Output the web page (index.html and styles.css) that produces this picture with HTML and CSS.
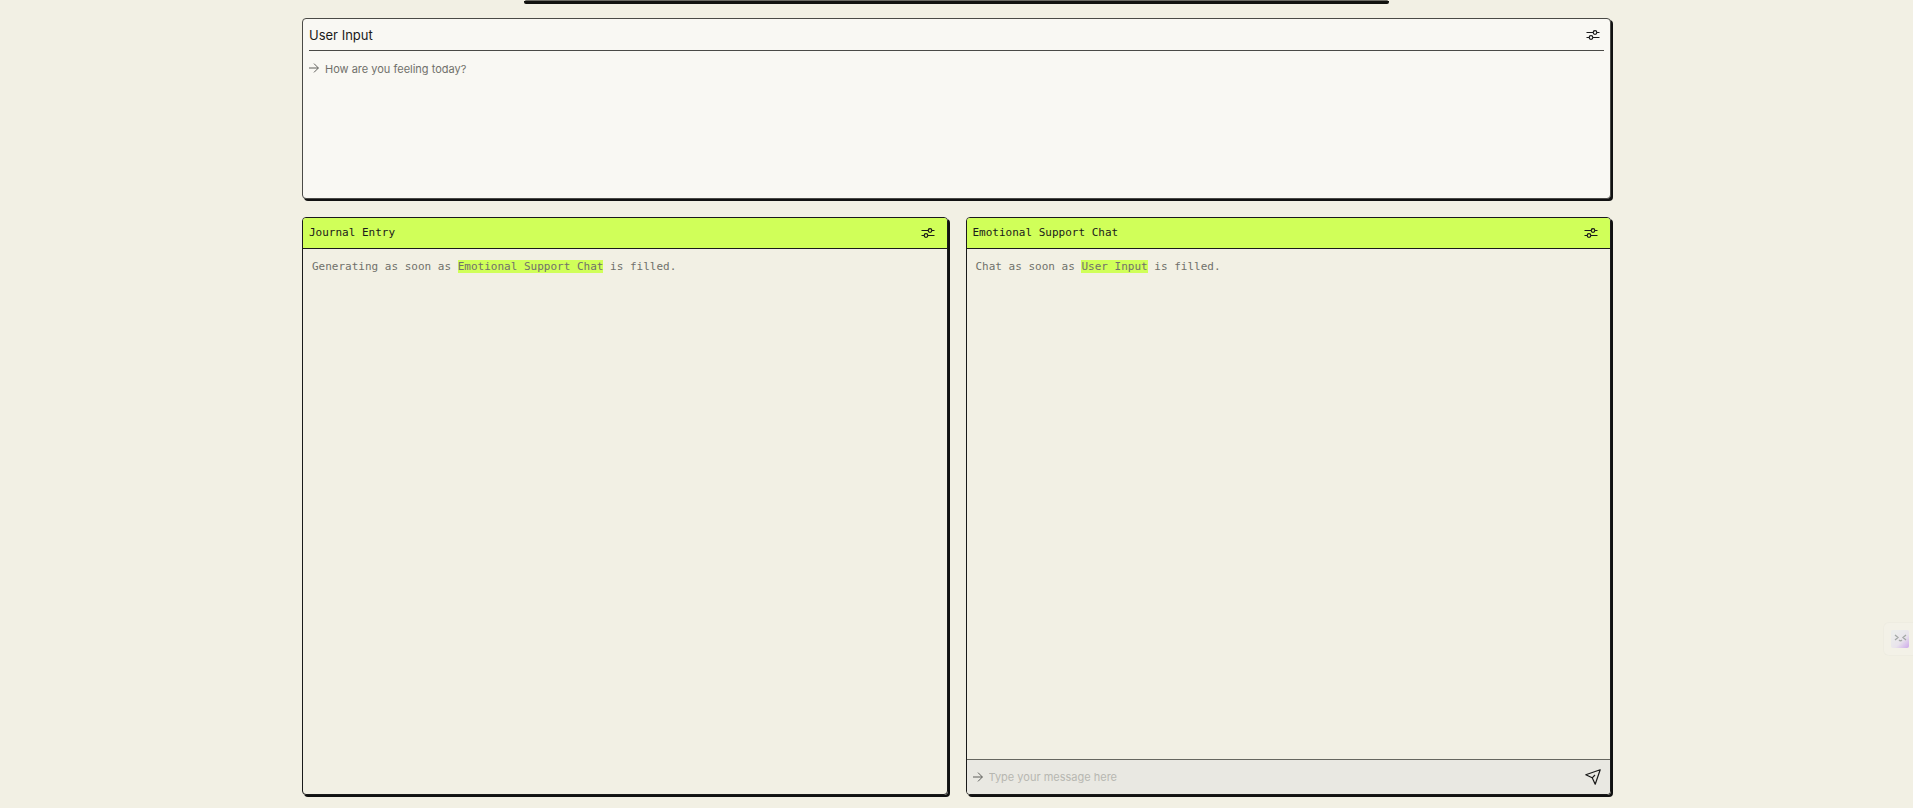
FILE: index.html
```html
<!DOCTYPE html>
<html lang="en">
<head>
<meta charset="utf-8">
<meta name="viewport" content="width=device-width, initial-scale=1">
<title>Journal</title>
<link rel="stylesheet" href="styles.css">
</head>
<body>
<svg class="defs" aria-hidden="true">
  <symbol id="sliders" viewBox="0 0 14 10"><path d="M0.5 2.5H7M11 2.5h2.5M0.5 7.5H3M7 7.5h6.5"/><circle cx="9" cy="2.5" r="1.8"/><circle cx="5" cy="7.5" r="1.8"/></symbol>
  <symbol id="arrow" viewBox="0 0 10 10"><path d="M0 5h9.3M5 0.6L9.4 5L5 9.4"/></symbol>
  <symbol id="send" viewBox="0 0 16 16"><path d="M15.2 0.8L0.8 5.8L7.2 8.8L10.2 15.2ZM7.2 8.8L10 6"/></symbol>
</svg>
<main class="page">
  <div class="intro-edge"></div>
  <section class="panel prompt">
    <header class="prompt-head">
      <label for="feeling">User Input</label>
      <button class="icon-button" type="button" aria-label="User Input settings"><svg class="sliders"><use href="#sliders"/></svg></button>
    </header>
    <div class="prompt-body">
      <svg class="arrow"><use href="#arrow"/></svg>
      <textarea id="feeling" class="field" placeholder="How are you feeling today?"></textarea>
    </div>
  </section>
  <div class="columns">
    <section class="panel output">
      <header class="output-head">
        <h2>Journal Entry</h2>
        <button class="icon-button" type="button" aria-label="Journal Entry settings"><svg class="sliders"><use href="#sliders"/></svg></button>
      </header>
      <p class="status">Generating as soon as <mark>Emotional Support Chat</mark> is filled.</p>
    </section>
    <section class="panel output">
      <header class="output-head">
        <h2>Emotional Support Chat</h2>
        <button class="icon-button" type="button" aria-label="Emotional Support Chat settings"><svg class="sliders"><use href="#sliders"/></svg></button>
      </header>
      <p class="status">Chat as soon as <mark>User Input</mark> is filled.</p>
      <form class="composer">
        <svg class="arrow"><use href="#arrow"/></svg>
        <input class="field message" type="text" aria-label="Message" placeholder="Type your message here">
        <button class="icon-button" type="button" aria-label="Send"><svg class="send"><use href="#send"/></svg></button>
      </form>
    </section>
  </div>
</main>
<button class="assistant" type="button" aria-label="Open assistant">
  <svg viewBox="0 0 18 18">
    <defs><linearGradient id="face" x1="0" y1="0" x2="1" y2="1"><stop offset="0.2" stop-color="#ecedec"/><stop offset="0.6" stop-color="#e9e4ec"/><stop offset="1" stop-color="#cda8ea"/></linearGradient></defs>
    <rect width="18" height="18" rx="2" fill="url(#face)"/>
    <path d="M4 5l3 2.500l-3 2.500M15 5l-3 2.500l3 2.500M8 10q1.500 1.500 3 0" fill="none" stroke="#a4a9a6" stroke-width="1.3"/>
  </svg>
</button>
</body>
</html>
```

FILE: styles.css
```css
* { box-sizing: border-box; }

body {
  margin: 0;
  background: #f2f0e4;
  color: #1a1a1a;
  font-family: Inter, "Liberation Sans", sans-serif;
}

.defs { position: absolute; width: 0; height: 0; }

svg { display: block; fill: none; stroke: #1a1a1a; }

.page {
  display: flex;
  flex-direction: column;
  width: 100%;
  max-width: 1309px;
  height: 100vh;
  margin: 0 auto;
  padding-bottom: 13px;
}

.intro-edge {
  width: 66%;
  height: 1px;
  margin: 0 auto 17px;
  background: #6d6c65;
  border-radius: 0 0 4px 4px;
  box-shadow: 0 2px 0 1px #11120f;
}

.panel {
  border: 1px solid #4a4a46;
  border-radius: 4px;
  box-shadow: 2px 2px 0 #111;
}

.prompt {
  display: flex;
  flex-direction: column;
  height: 181px;
  margin-bottom: 18px;
  padding: 0 6px;
  background: #f9f8f3;
}

.prompt-head {
  display: flex;
  align-items: center;
  justify-content: space-between;
  height: 32px;
  padding-right: 4px;
  border-bottom: 1px solid #4a4a46;
  font-size: 13px;
}

.prompt-body {
  display: flex;
  flex: 1;
  gap: 6px;
  padding-top: 12px;
}

.arrow { flex: none; width: 10px; height: 10px; stroke: #5f5f5b; stroke-width: 1; }
.sliders { width: 14px; height: 10px; stroke-width: 1.2; }
.send { width: 16px; height: 16px; stroke-width: 1.2; stroke-linejoin: round; }

.icon-button {
  padding: 0;
  border: 0;
  background: none;
}

.field {
  flex: 1;
  min-width: 0;
  margin: 0;
  padding: 0;
  border: 0;
  outline: 0;
  resize: none;
  background: none;
  font: 11px/12px Inter, "Liberation Sans", sans-serif;
}

.field::placeholder { color: #70706b; opacity: 1; }
.message::placeholder { color: #b7b7b1; }

.columns {
  display: grid;
  grid-template-columns: 1fr 1fr;
  flex: 1;
  gap: 18px;
}

.output {
  display: flex;
  flex-direction: column;
  overflow: hidden;
  border-color: #1a1a1a;
}

.output-head {
  display: flex;
  align-items: center;
  justify-content: space-between;
  height: 31px;
  padding: 0 12px 0 6px;
  border-bottom: 1px solid #1a1a1a;
  background: #d0ff59;
}

.output-head h2,
.status {
  margin: 0;
  font: 11px/14px "DejaVu Sans Mono", monospace;
}

.status {
  flex: 1;
  padding: 11px 9px;
  color: #70706b;
}

.status mark { background: #d0ff59; color: inherit; }

.composer {
  display: flex;
  align-items: center;
  gap: 6px;
  height: 35px;
  padding: 0 9px 0 6px;
  border-top: 1px solid #66665f;
  background: #e9e8e2;
}

.assistant {
  position: fixed;
  right: 0;
  top: 622px;
  padding: 7px 4px 7px 7px;
  border: 1px solid #eeece1;
  border-right: 0;
  border-radius: 6px 0 0 6px;
  background: #f3f1e7;
}

.assistant svg { width: 18px; height: 18px; stroke: none; }
```
